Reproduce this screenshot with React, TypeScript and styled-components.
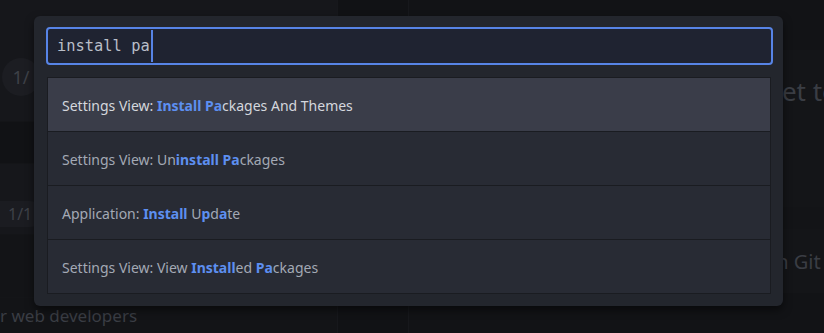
import styled, { createGlobalStyle } from 'styled-components';

const GlobalStyle = createGlobalStyle`
    html, body {
        margin: 0;
        padding: 0;
        background: #121316;
    }
    #root {
        width: 824px;
        height: 333px;
    }
`;

const Screen = styled.div`
    position: relative;
    width: 824px;
    height: 333px;
    overflow: hidden;
    background: #121316;
    font-family: 'Noto Sans', 'Open Sans', sans-serif;
`;

/* dimmed workspace behind the palette */
const Workspace = styled.div`
    display: flex;
    height: 100%;
`;

const LeftPane = styled.div`
    width: 337px;
    flex-shrink: 0;
    display: flex;
    flex-direction: column;
    border-right: 1px solid #17181c;
`;

const MidPane = styled.div`
    width: 70px;
    flex-shrink: 0;
    background: #111215;
    border-right: 1px solid #17181c;
`;

const RightPane = styled.div`
    flex: 1;
    min-width: 0;
    overflow: hidden;
    display: flex;
    flex-direction: column;
`;

const Band = styled.div<{ $h: number; $bg: string }>`
    height: ${(p) => p.$h}px;
    background: ${(p) => p.$bg};
    display: flex;
    align-items: center;
    flex-shrink: 0;
    border-bottom: 1px solid #141518;
`;

const RoundBadge = styled.div`
    margin-left: 2px;
    margin-top: 32px;
    width: 38px;
    height: 38px;
    border-radius: 50%;
    background: #1c1d22;
    color: #3e4148;
    font-size: 18px;
    display: flex;
    align-items: center;
    justify-content: center;
`;

const PillBadge = styled.div`
    margin-top: 30px;
    padding: 2px 10px 2px 8px;
    border-radius: 0 12px 12px 0;
    background: #1b1c21;
    color: #3e4148;
    font-size: 16px;
`;

const FadedText = styled.div<{ $size: number; $pad: number }>`
    padding-left: ${(p) => p.$pad}px;
    font-size: ${(p) => p.$size}px;
    color: #3a3d44;
    white-space: nowrap;
`;

/* command palette overlay */
const Palette = styled.div`
    position: absolute;
    left: 34px;
    top: 16px;
    width: 749px;
    box-sizing: border-box;
    padding: 11px 10px 12px 12px;
    background: #23262d;
    border-radius: 6px;
    box-shadow: 0 4px 8px rgba(0, 0, 0, 0.5);
    display: flex;
    flex-direction: column;
    gap: 12px;
`;

const SearchBox = styled.div`
    height: 38px;
    box-sizing: border-box;
    border: 2px solid #5784e6;
    border-radius: 4px;
    background: #1f2331;
    display: flex;
    align-items: center;
    padding-left: 9px;
`;

const Query = styled.span`
    font-family: 'DejaVu Sans Mono', 'Liberation Mono', monospace;
    font-size: 15.4px;
    color: #b9bec8;
`;

const Caret = styled.span`
    width: 2px;
    height: 32px;
    background: #5784e6;
    margin-left: 1px;
`;

const List = styled.ul`
    list-style: none;
    margin: 0 0 0 1px;
    padding: 0;
    border: 1px solid #1a1c21;
    display: flex;
    flex-direction: column;
    width: 722px;
`;

const Item = styled.li<{ $selected?: boolean }>`
    height: 53px;
    display: flex;
    align-items: center;
    padding-left: 14px;
    padding-top: 1px;
    box-sizing: border-box;
    font-size: 14px;
    color: ${(p) => (p.$selected ? '#d4d7dd' : '#a3a9b4')};
    background: ${(p) => (p.$selected ? '#3a3d49' : '#282b34')};
    & + & {
        height: 54px;
        border-top: 1px solid #1a1c21;
    }
`;

const Match = styled.b`
    color: #5d8ff0;
    font-weight: 700;
`;

type Part = string | { m: string };

const commands: Part[][] = [
    ['Settings View: ', { m: 'Install Pa' }, 'ckages And Themes'],
    ['Settings View: Un', { m: 'install Pa' }, 'ckages'],
    ['Application: ', { m: 'Install' }, ' U', { m: 'p' }, 'd', { m: 'a' }, 'te'],
    ['Settings View: View ', { m: 'Install' }, 'ed ', { m: 'Pa' }, 'ckages'],
];

export default function App() {
    return (
        <Screen>
            <GlobalStyle />
            <Workspace>
                <LeftPane>
                    <Band $h={121} $bg="#16171b">
                        <RoundBadge>1/</RoundBadge>
                    </Band>
                    <Band $h={41} $bg="#111215" />
                    <Band $h={70} $bg="#16171b">
                        <PillBadge>1/1</PillBadge>
                    </Band>
                    <Band $h={62} $bg="#131417" />
                    <Band $h={35} $bg="#131417">
                        <FadedText $size={17} $pad={0}>r web developers</FadedText>
                    </Band>
                </LeftPane>
                <MidPane />
                <RightPane>
                    <Band $h={50} $bg="#121316" />
                    <Band $h={80} $bg="#141518">
                        <FadedText $size={26} $pad={354}>Get to know</FadedText>
                    </Band>
                    <Band $h={74} $bg="#141518" />
                    <Band $h={22} $bg="#131417" />
                    <Band $h={62} $bg="#141518">
                        <FadedText $size={20} $pad={362}>in Git and</FadedText>
                    </Band>
                    <Band $h={45} $bg="#121316" />
                </RightPane>
            </Workspace>
            <Palette>
                <SearchBox>
                    <Query>install pa</Query>
                    <Caret />
                </SearchBox>
                <List>
                    {commands.map((parts, i) => (
                        <Item key={i} $selected={i === 0}>
                            <span>
                                {parts.map((part, j) =>
                                    typeof part === 'string' ? (
                                        part
                                    ) : (
                                        <Match key={j}>{part.m}</Match>
                                    )
                                )}
                            </span>
                        </Item>
                    ))}
                </List>
            </Palette>
        </Screen>
    );
}
